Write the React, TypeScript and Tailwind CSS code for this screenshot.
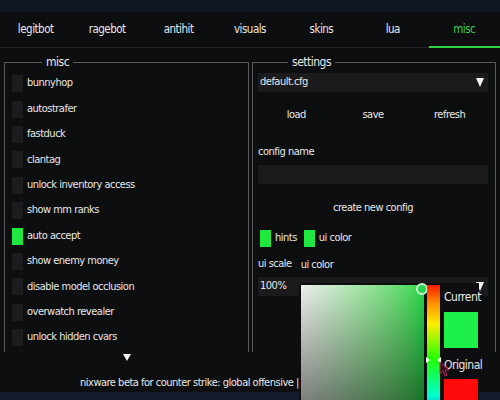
import React from 'react';

const TABS = ['legitbot', 'ragebot', 'antihit', 'visuals', 'skins', 'lua', 'misc'];

const MISC = [
  { label: 'bunnyhop', on: false },
  { label: 'autostrafer', on: false },
  { label: 'fastduck', on: false },
  { label: 'clantag', on: false },
  { label: 'unlock inventory access', on: false },
  { label: 'show mm ranks', on: false },
  { label: 'auto accept', on: true },
  { label: 'show enemy money', on: false },
  { label: 'disable model occlusion', on: false },
  { label: 'overwatch revealer', on: false },
  { label: 'unlock hidden cvars', on: false },
];

const FONT = "font-['DejaVu_Sans_Condensed','Liberation_Sans',sans-serif]";

function Arrow() {
  return (
    <svg width="8" height="9" viewBox="0 0 8 9" className="shrink-0">
      <polygon points="0,0 8,0 4,9" fill="#f2f2f2" />
    </svg>
  );
}

function Select({ value }: { value: string }) {
  return (
    <div className="h-[19px] bg-[#1b1b1d] flex items-center justify-between pl-[2px] pr-[4px]">
      <span>{value}</span>
      <Arrow />
    </div>
  );
}

function Check({ on }: { on: boolean }) {
  return <div className={on ? 'w-[11px] h-[17px] bg-[#1fe83f] shrink-0' : 'w-[11px] h-[17px] bg-[#1c1c1e] shrink-0'} />;
}

function ColorPicker() {
  return (
    <div className="absolute left-[299px] top-[283px] w-[180px] h-[140px] bg-[#0e0e10] flex gap-[3px] p-[2px]">
      {/* saturation / value */}
      <div className="relative w-[124px] h-[124px] bg-linear-to-r from-[#ededed] to-[#1fd84a]">
        <div className="absolute inset-0 bg-linear-to-b from-transparent to-black/50" />
        <div className="absolute -right-[4px] -top-[2px] w-[12px] h-[12px] rounded-full border-2 border-[#c8f0cc] bg-[#28d44e]" />
      </div>
      {/* hue */}
      <div className="relative w-[13px] h-[216px] bg-[linear-gradient(to_bottom,#ff1a00,#ff8a00_8%,#ffee00_18%,#22ff00_34%,#00ffd0_51%,#0050ff_66%,#ff00ff_83%,#ff0000)]">
        <svg width="4" height="6" viewBox="0 0 4 6" className="absolute -left-[1px] top-[72px]">
          <polygon points="0,0 4,3 0,6" fill="#fff" />
        </svg>
        <svg width="4" height="6" viewBox="0 0 4 6" className="absolute -right-[1px] top-[72px]">
          <polygon points="4,0 0,3 4,6" fill="#fff" />
        </svg>
      </div>
      <div className="flex flex-col w-[34px] pl-[1px] text-[12px]">
        <span className="h-[22px] leading-[22px] mt-[1px]">Current</span>
        <div className="w-[34px] h-[36px] mt-[4px] bg-[#1ef04a]" />
        <span className="h-[22px] leading-[22px] mt-[6px]">Original</span>
        <div className="w-[34px] h-[36px] mt-[3px] bg-[#ff0a0a]" />
      </div>
      {/* mouse cursor */}
      <svg width="10" height="16" viewBox="0 0 10 16" className="absolute left-[140px] top-[78px]">
        <polygon points="1,1 1,13 4,10 6,15 8,14 6,9 10,9" fill="#3a0c1a" stroke="#b02a55" strokeWidth="1" />
      </svg>
    </div>
  );
}

export default function App() {
  return (
    <div className={`relative w-[500px] h-[400px] overflow-hidden bg-[#0d0e10] text-[#e8e8e8] text-[11px] tracking-[-0.5px] ${FONT} flex flex-col`}>
      <div className="h-[12px] bg-[#101826] shrink-0" />

      {/* Tabs */}
      <nav className="h-[36px] flex border-b border-[#232325] shrink-0 text-[11.5px]">
        {TABS.map((t) => (
          <div
            key={t}
            className={t === 'misc'
              ? 'flex-1 flex items-center justify-center text-[#3fcf4c] border-b-2 border-[#2fcf43] -mb-[1px] pt-[1px]'
              : 'flex-1 flex items-center justify-center'}
          >
            {t}
          </div>
        ))}
      </nav>

      <div className="flex gap-[3px] px-[4px] mt-[7px] h-[297px] shrink-0">
        {/* misc */}
        <fieldset className="w-[245px] h-full border border-b-0 border-[#5a5a5c]">
          <legend className="ml-[37px] px-[4px] leading-[14px] text-[12px]">misc</legend>
          <div className="pt-[2px] pl-[7px]">
            {MISC.map((m) => (
              <div key={m.label} className="h-[25.4px] flex items-center gap-[4px]">
                <Check on={m.on} />
                <span>{m.label}</span>
              </div>
            ))}
          </div>
        </fieldset>

        {/* settings */}
        <fieldset className="flex-1 h-full border border-b-0 border-[#5a5a5c]">
          <legend className="ml-[35px] px-[4px] leading-[14px] text-[12px]">settings</legend>
          <div className="flex flex-col pl-[5px] pr-[7px]">
            <div className="mt-[4px]"><Select value="default.cfg" /></div>
            <div className="mt-[13px] h-[20px] flex">
              {['load', 'save', 'refresh'].map((b) => (
                <div key={b} className="flex-1 flex items-center justify-center">{b}</div>
              ))}
            </div>
            <div className="mt-[19px] h-[16px] flex items-center">config name</div>
            <div className="mt-[5px] h-[19px] bg-[#1b1b1d]" />
            <div className="mt-[14px] h-[20px] flex items-center justify-center">create new config</div>
            <div className="mt-[12px] h-[17px] flex items-center gap-[4px] pl-[2px]">
              <Check on />
              <span className="mr-[3px]">hints</span>
              <Check on />
              <span>ui color</span>
            </div>
            <div className="mt-[9px] h-[16px] flex items-center gap-[9px]">
              <span>ui scale</span>
              <span className="mt-[3px]">ui color</span>
            </div>
            <div className="mt-[5px]"><Select value="100%" /></div>
          </div>
        </fieldset>
      </div>

      {/* footer */}
      <div className="h-[40px] shrink-0 flex flex-col">
        <div className="w-[245px] ml-[4px] flex justify-center mt-[2px]">
          <svg width="8" height="7" viewBox="0 0 8 7">
            <polygon points="0,0 8,0 4,7" fill="#f2f2f2" />
          </svg>
        </div>
        <div className="mt-[15px] pl-[80px] leading-[14px] whitespace-nowrap">
          nixware beta for counter strike: global offensive | build: dec 14 2019
        </div>
      </div>
      <div className="flex-1 bg-[#131a29]" />

      <ColorPicker />
    </div>
  );
}
